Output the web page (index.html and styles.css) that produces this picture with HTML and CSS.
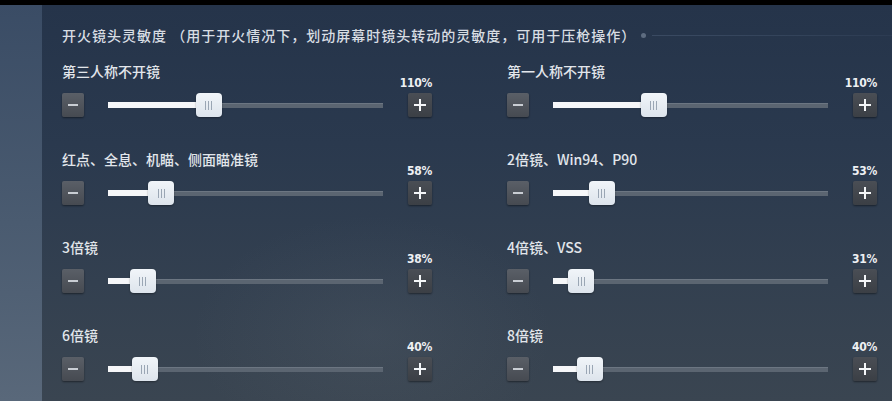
FILE: index.html
```html
<!DOCTYPE html>
<html lang="zh-CN">
  <head>
    <meta charset="UTF-8" />
    <title>开火镜头灵敏度</title>
    <link rel="stylesheet" href="styles.css">
  </head>
  <body>
    <div class="topbar"></div>
    <div class="screen">
      <aside class="side"></aside>

      <main class="panel">
        <div class="title-row">
          <h1 class="title">开火镜头灵敏度 （用于开火情况下，划动屏幕时镜头转动的灵敏度，可用于压枪操作）</h1>
          <span class="dot"></span>
          <span class="rule"></span>
        </div>

        <div class="grid">
          <div class="setting">
            <div class="head">
              <span class="label">第三人称不开镜</span>
              <span class="value">110%</span>
            </div>
            <div class="control">
              <button class="step minus"></button>
              <div class="track" style="--pos: 36.67%">
                <div class="fill"></div>
                <div class="thumb"><i></i><i></i><i></i></div>
              </div>
              <button class="step plus"></button>
            </div>
          </div>

          <div class="setting">
            <div class="head">
              <span class="label">第一人称不开镜</span>
              <span class="value">110%</span>
            </div>
            <div class="control">
              <button class="step minus"></button>
              <div class="track" style="--pos: 36.67%">
                <div class="fill"></div>
                <div class="thumb"><i></i><i></i><i></i></div>
              </div>
              <button class="step plus"></button>
            </div>
          </div>

          <div class="setting">
            <div class="head">
              <span class="label">红点、全息、机瞄、侧面瞄准镜</span>
              <span class="value">58%</span>
            </div>
            <div class="control">
              <button class="step minus"></button>
              <div class="track" style="--pos: 19.33%">
                <div class="fill"></div>
                <div class="thumb"><i></i><i></i><i></i></div>
              </div>
              <button class="step plus"></button>
            </div>
          </div>

          <div class="setting">
            <div class="head">
              <span class="label">2倍镜、Win94、P90</span>
              <span class="value">53%</span>
            </div>
            <div class="control">
              <button class="step minus"></button>
              <div class="track" style="--pos: 17.67%">
                <div class="fill"></div>
                <div class="thumb"><i></i><i></i><i></i></div>
              </div>
              <button class="step plus"></button>
            </div>
          </div>

          <div class="setting">
            <div class="head">
              <span class="label">3倍镜</span>
              <span class="value">38%</span>
            </div>
            <div class="control">
              <button class="step minus"></button>
              <div class="track" style="--pos: 12.67%">
                <div class="fill"></div>
                <div class="thumb"><i></i><i></i><i></i></div>
              </div>
              <button class="step plus"></button>
            </div>
          </div>

          <div class="setting">
            <div class="head">
              <span class="label">4倍镜、VSS</span>
              <span class="value">31%</span>
            </div>
            <div class="control">
              <button class="step minus"></button>
              <div class="track" style="--pos: 10.33%">
                <div class="fill"></div>
                <div class="thumb"><i></i><i></i><i></i></div>
              </div>
              <button class="step plus"></button>
            </div>
          </div>

          <div class="setting">
            <div class="head">
              <span class="label">6倍镜</span>
              <span class="value">40%</span>
            </div>
            <div class="control">
              <button class="step minus"></button>
              <div class="track" style="--pos: 13.33%">
                <div class="fill"></div>
                <div class="thumb"><i></i><i></i><i></i></div>
              </div>
              <button class="step plus"></button>
            </div>
          </div>

          <div class="setting">
            <div class="head">
              <span class="label">8倍镜</span>
              <span class="value">40%</span>
            </div>
            <div class="control">
              <button class="step minus"></button>
              <div class="track" style="--pos: 13.33%">
                <div class="fill"></div>
                <div class="thumb"><i></i><i></i><i></i></div>
              </div>
              <button class="step plus"></button>
            </div>
          </div>
        </div>
      </main>
    </div>
  </body>
</html>
```

FILE: styles.css
```css
html,
body {
  margin: 0;
  height: 100%;
  overflow: hidden;
  background: #000;
  font-family: "Noto Sans CJK SC", "Noto Sans", sans-serif;
  color: #e2e6eb;
}
.topbar {
  height: 5px;
  background: #000;
}
.screen {
  display: flex;
  height: 396px;
}
.side {
  width: 42px;
  flex: none;
  background: linear-gradient(180deg, #3a4c65 0%, #4a5b70 55%, #59687a 100%);
}
.panel {
  flex: 1;
  padding: 20px 15px 0 20px;
  background:
    radial-gradient(ellipse 180px 120px at 330px 330px, rgba(120, 130, 140, 0.12), transparent),
    linear-gradient(180deg, #25344a 0%, #2a394e 35%, #334050 70%, #3a4551 100%);
}

.title-row {
  display: flex;
  align-items: center;
  height: 20px;
}
.title {
  margin: 0;
  font-size: 14px;
  font-weight: 500;
  line-height: 20px;
  letter-spacing: 1px;
  color: #d8dde3;
  white-space: nowrap;
}
.dot {
  width: 5px;
  height: 5px;
  margin-left: 5px;
  border-radius: 50%;
  background: #5d6c80;
}
.rule {
  flex: 1;
  height: 1px;
  margin-left: 6px;
  margin-right: -15px;
  background: linear-gradient(90deg, #3a4a62, #33435a 60%, #2c3b52);
}

.grid {
  display: grid;
  grid-template-columns: 370px 370px;
  column-gap: 75px;
  row-gap: 33px;
  margin-top: 17px;
}
.head {
  display: flex;
  justify-content: space-between;
  height: 28px;
}
.label {
  font-size: 14px;
  font-weight: 500;
  line-height: 18px;
  color: #e2e6eb;
  white-space: nowrap;
}
.value {
  align-self: flex-end;
  font-family: "DejaVu Sans Condensed", "Liberation Sans Narrow", "DejaVu Sans", sans-serif;
  font-weight: bold;
  font-size: 12px;
  line-height: 14px;
  letter-spacing: -0.3px;
  color: #eef0f3;
}

.control {
  display: flex;
  align-items: center;
  gap: 24px;
  height: 24px;
  margin-top: 3px;
}
.step {
  position: relative;
  flex: none;
  width: 22px;
  height: 24px;
  padding: 0;
  border: none;
  border-radius: 2px;
  background: linear-gradient(180deg, #5a5f67, #464a51);
  box-shadow: 0 1px 2px rgba(0, 0, 0, 0.45);
}
.step::before {
  content: "";
  position: absolute;
  left: 6px;
  top: 11px;
  width: 10px;
  height: 2px;
  background: #c9cdd3;
}
.plus {
  width: 24px;
  margin-left: 1px;
  background: linear-gradient(180deg, #4a4e55, #3b3f45);
}
.plus::before {
  left: 6px;
  width: 12px;
  background: #f4f6f8;
}
.plus::after {
  content: "";
  position: absolute;
  left: 11px;
  top: 6px;
  width: 2px;
  height: 12px;
  background: #f4f6f8;
}

.track {
  position: relative;
  flex: 1;
  height: 24px;
}
.track::before {
  content: "";
  position: absolute;
  left: 0;
  right: 0;
  top: 10px;
  height: 5px;
  background: #5b6571;
  border-top: 1px solid #6c7682;
  box-sizing: border-box;
}
.fill {
  position: absolute;
  left: 0;
  top: 9px;
  width: var(--pos);
  height: 6px;
  background: #f6f7f9;
}
.thumb {
  position: absolute;
  top: 0;
  left: calc(var(--pos) - 13px);
  width: 26px;
  height: 24px;
  display: flex;
  justify-content: center;
  align-items: center;
  gap: 2px;
  border-radius: 4px;
  background: linear-gradient(180deg, #f1f5f9, #dde4ec);
  box-shadow: 0 1px 2px rgba(0, 0, 0, 0.35);
}
.thumb i {
  width: 1px;
  height: 9px;
  background: #9aa6b4;
}
```
